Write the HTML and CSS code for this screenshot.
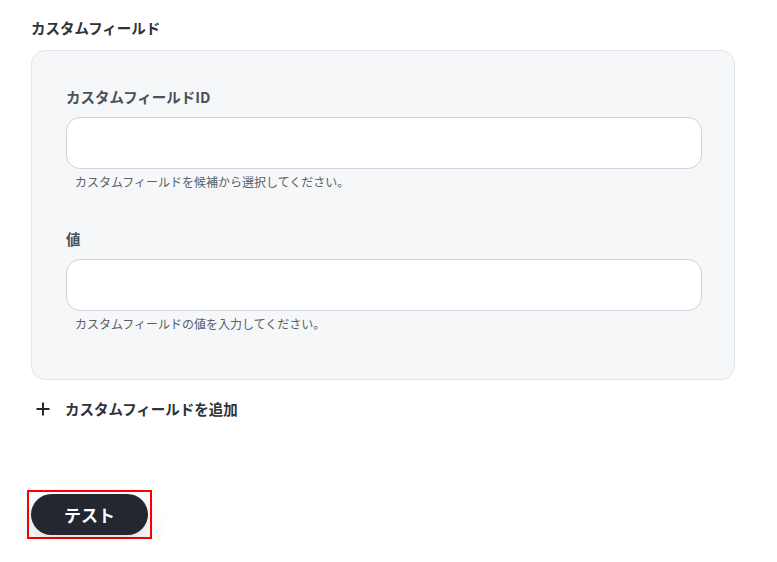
FILE: index.html
```html
<!DOCTYPE html>
<html lang="ja">
<head>
    <meta charset="UTF-8">
    <meta name="viewport" content="width=device-width, initial-scale=1.0">
    <title>カスタムフィールド</title>
    <link rel="stylesheet" href="styles.css">
</head>
<body>
    <div class="page">
        <h2 class="section-title">カスタムフィールド</h2>
        <div class="card">
            <div class="field">
                <label class="field-label">カスタムフィールドID</label>
                <input class="field-input" type="text">
                <p class="field-help">カスタムフィールドを候補から選択してください。</p>
            </div>
            <div class="field">
                <label class="field-label">値</label>
                <input class="field-input" type="text">
                <p class="field-help">カスタムフィールドの値を入力してください。</p>
            </div>
        </div>
        <button class="add-btn" type="button">
            <svg class="add-icon" viewBox="0 0 14 14" width="14" height="14">
                <path d="M7 0.5v13M0.5 7h13" stroke="#23272f" stroke-width="2"></path>
            </svg>
            <span>カスタムフィールドを追加</span>
        </button>
        <div class="actions">
            <span class="highlight">
                <button class="test-btn" type="button">テスト</button>
            </span>
        </div>
    </div>
</body>
</html>
```

FILE: styles.css
```css
* {
    margin: 0;
    padding: 0;
    box-sizing: border-box;
}
body {
    background-color: #fff;
    font-family: "Noto Sans CJK JP", "Noto Sans", sans-serif;
    color: #333;
}
.page {
    padding: 17px 42px 0 31px;
}
.section-title {
    font-size: 14.5px;
    line-height: 22px;
    font-weight: 700;
    color: #2f3237;
    margin-bottom: 11px;
}
.card {
    background-color: #f5f7f9;
    border: 1px solid #e2e5ea;
    border-radius: 14px;
    padding: 35px 32px 46px 34px;
    display: flex;
    flex-direction: column;
    gap: 37px;
}
.field {
    display: flex;
    flex-direction: column;
}
.field-label {
    font-size: 14.5px;
    line-height: 22px;
    font-weight: 700;
    color: #4b5059;
    margin-bottom: 9px;
}
.field-input {
    height: 52px;
    background: #fff;
    border: 1px solid #cdd3dd;
    border-radius: 14px;
    padding: 0 16px;
    font: inherit;
}
.field-help {
    font-size: 12px;
    line-height: 18px;
    color: #5a5e66;
    margin-top: 4px;
    padding-left: 9px;
}
.add-btn {
    display: flex;
    align-items: center;
    gap: 15px;
    margin-top: 18px;
    padding-left: 5px;
    background: none;
    border: none;
    font-family: inherit;
    font-size: 14.5px;
    line-height: 22px;
    font-weight: 700;
    color: #2f3237;
}
.actions {
    margin-top: 70px;
    margin-left: -4px;
}
.highlight {
    display: inline-block;
    border: 2px solid #ff0000;
    padding: 2px;
}
.test-btn {
    display: block;
    width: 117px;
    height: 41px;
    border: none;
    border-radius: 21px;
    background-color: #23272f;
    color: #fff;
    font-family: inherit;
    font-size: 17px;
    font-weight: 700;
    box-shadow: 0 10px 22px rgba(0, 0, 0, 0.14);
}
```
